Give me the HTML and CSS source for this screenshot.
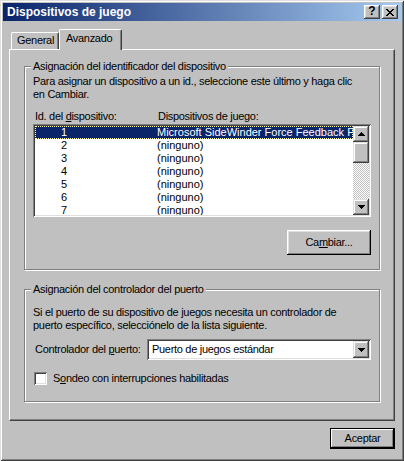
FILE: index.html
```html
<!DOCTYPE html>
<html lang="es">
<head>
<meta charset="UTF-8">
<meta name="viewport" content="width=device-width, initial-scale=1.0">
<title>Dispositivos de juego</title>
<link rel="stylesheet" href="styles.css">
</head>
<body>
    <div class="window">
        <div class="titlebar">
            <span class="title">Dispositivos de juego</span>
            <div class="caption-btns">
                <span class="cbtn help">?</span>
                <span class="cbtn">
                    <svg width="8" height="7" viewBox="0 0 8 7" shape-rendering="crispEdges">
                        <path d="M0 0h2v1h-2zM6 0h2v1h-2zM1 1h2v1h-2zM5 1h2v1h-2zM2 2h4v1h-4zM3 3h2v1h-2zM2 4h4v1h-4zM1 5h2v1h-2zM5 5h2v1h-2zM0 6h2v1h-2zM6 6h2v1h-2z" fill="#000"/>
                    </svg>
                </span>
            </div>
        </div>

        <div class="client">
            <div class="tabs">
                <div class="tab">General</div>
                <div class="tab active">Avanzado</div>
            </div>

            <div class="panel">
                <div class="group grupo-id">
                    <span class="legend">Asignación del identificador del dispositivo</span>
                    <p>Para asignar un dispositivo a un id., seleccione este último y haga clic<br>en Cambiar.</p>
                    <div class="cols">
                        <span class="col-id">Id. del <u>d</u>ispositivo:</span>
                        <span class="col-dev">Dispositivos de juego:</span>
                    </div>
                    <div class="listbox">
                        <div class="rows">
                            <div class="row sel"><span class="id">1</span><span class="dev">Microsoft SideWinder Force Feedback Pro</span></div>
                            <div class="row"><span class="id">2</span><span class="dev">(ninguno)</span></div>
                            <div class="row"><span class="id">3</span><span class="dev">(ninguno)</span></div>
                            <div class="row"><span class="id">4</span><span class="dev">(ninguno)</span></div>
                            <div class="row"><span class="id">5</span><span class="dev">(ninguno)</span></div>
                            <div class="row"><span class="id">6</span><span class="dev">(ninguno)</span></div>
                            <div class="row"><span class="id">7</span><span class="dev">(ninguno)</span></div>
                        </div>
                        <div class="vscroll">
                            <div class="sbtn">
                                <svg width="7" height="4" viewBox="0 0 7 4" shape-rendering="crispEdges"><path d="M3 0h1v1h-1zM2 1h3v1h-3zM1 2h5v1h-5zM0 3h7v1h-7z" fill="#000"/></svg>
                            </div>
                            <div class="thumb"></div>
                            <div class="track"></div>
                            <div class="sbtn">
                                <svg width="7" height="4" viewBox="0 0 7 4" shape-rendering="crispEdges"><path d="M0 0h7v1h-7zM1 1h5v1h-5zM2 2h3v1h-3zM3 3h1v1h-1z" fill="#000"/></svg>
                            </div>
                        </div>
                    </div>
                    <div class="acciones">
                        <button class="btn btn-cambiar">Ca<u>m</u>biar...</button>
                    </div>
                </div>

                <div class="group grupo-puerto">
                    <span class="legend">Asignación del controlador del puerto</span>
                    <p>Si el puerto de su dispositivo de juegos necesita un controlador de<br>puerto específico, selecciónelo de la lista siguiente.</p>
                    <div class="campo">
                        <span>Controlador del <u>p</u>uerto:</span>
                        <div class="combo">
                            <span class="combo-valor">Puerto de juegos estándar</span>
                            <div class="sbtn combo-btn">
                                <svg width="7" height="4" viewBox="0 0 7 4" shape-rendering="crispEdges"><path d="M0 0h7v1h-7zM1 1h5v1h-5zM2 2h3v1h-3zM3 3h1v1h-1z" fill="#000"/></svg>
                            </div>
                        </div>
                    </div>
                    <label class="check">
                        <span class="checkbox"></span>
                        <span>S<u>o</u>ndeo con interrupciones habilitadas</span>
                    </label>
                </div>
            </div>

            <div class="pie">
                <button class="btn default">Aceptar</button>
            </div>
        </div>
    </div>
</body>
</html>
```

FILE: styles.css
```css
* {
    box-sizing: border-box;
}

body {
    margin: 0;
    background: #c0c0c0;
    font-family: "Liberation Sans", Arial, sans-serif;
    font-size: 11px;
    line-height: 13px;
    letter-spacing: -0.3px;
    color: #000;
}

p {
    margin: 0;
    white-space: nowrap;
}

u {
    text-underline-offset: 1px;
}

.window {
    width: 404px;
    height: 461px;
    padding: 3px;
    display: flex;
    flex-direction: column;
    background: #c0c0c0;
    box-shadow: inset 1px 1px #dfdfdf, inset -1px -1px #404040,
                inset 2px 2px #fff, inset -2px -2px #808080;
}

/* barra de titulo */
.titlebar {
    height: 18px;
    display: flex;
    align-items: center;
    padding: 0 3px 0 4px;
    background: linear-gradient(to right, #0a246a, #a6caf0);
    color: #fff;
    font-size: 12px;
    font-weight: bold;
    letter-spacing: 0;
}

.title {
    flex: 1;
}

.caption-btns {
    display: flex;
    gap: 2px;
}

.cbtn {
    width: 16px;
    height: 14px;
    display: flex;
    align-items: center;
    justify-content: center;
    background: #c0c0c0;
    color: #000;
    box-shadow: inset -1px -1px #404040, inset 1px 1px #fff,
                inset -2px -2px #808080, inset 2px 2px #dfdfdf;
}

.cbtn.help {
    font-size: 12px;
    padding-bottom: 1px;
}

.client {
    flex: 1;
    display: flex;
    flex-direction: column;
    padding: 8px 6px 0;
}

/* pestañas */
.tabs {
    height: 20px;
    display: flex;
    align-items: flex-end;
    padding-left: 2px;
    position: relative;
    z-index: 1;
}

.tab {
    width: 48px;
    height: 17px;
    padding: 1px 0 0 5px;
    border: 1px solid #fff;
    border-bottom: 0;
    border-right-color: #404040;
    border-radius: 2px 2px 0 0;
    box-shadow: inset -1px 0 #808080;
    white-space: nowrap;
}

.tab.active {
    width: 63px;
    height: 21px;
    margin-bottom: -1px;
    padding: 2px 0 0 6px;
    background: #c0c0c0;
}

.panel {
    height: 372px;
    padding-left: 14px;
    border: 1px solid #fff;
    border-right-color: #404040;
    border-bottom-color: #404040;
    box-shadow: inset -1px -1px #808080;
}

/* grupos */
.group {
    position: relative;
    width: 356px;
    border: 1px solid #808080;
    box-shadow: inset 1px 1px #fff, 1px 1px #fff;
    padding: 8px 8px 14px;
}

.legend {
    position: absolute;
    top: -7px;
    left: 6px;
    padding: 0 2px;
    background: #c0c0c0;
    white-space: nowrap;
}

.grupo-id {
    margin-top: 16px;
}

.grupo-puerto {
    margin-top: 19px;
    padding-top: 16px;
    padding-bottom: 16px;
}

.cols {
    display: flex;
    margin-top: 9px;
    padding-left: 2px;
}

.col-id {
    width: 123px;
}

.listbox {
    height: 93px;
    margin-top: 1px;
    padding: 2px;
    display: flex;
    background: #fff;
    box-shadow: inset 1px 1px #808080, inset -1px -1px #fff,
                inset 2px 2px #404040, inset -2px -2px #dfdfdf;
}

.rows {
    flex: 1;
    overflow: hidden;
    letter-spacing: 0;
}

.row {
    height: 13px;
    display: flex;
    white-space: nowrap;
}

.row .id {
    width: 58px;
    flex-shrink: 0;
    text-align: center;
}

.row .dev {
    padding-left: 64px;
}

.row.sel {
    background: #0a246a;
    color: #fff;
    outline: 1px dotted #ffffa0;
    outline-offset: -1px;
}

.vscroll {
    width: 16px;
    display: flex;
    flex-direction: column;
}

.sbtn,
.thumb {
    background: #c0c0c0;
    box-shadow: inset -1px -1px #404040, inset 1px 1px #dfdfdf,
                inset -2px -2px #808080, inset 2px 2px #fff;
}

.sbtn {
    height: 16px;
    display: flex;
    align-items: center;
    justify-content: center;
}

.thumb {
    height: 21px;
}

.track {
    flex: 1;
    background: repeating-conic-gradient(#fff 0 25%, #c0c0c0 0 50%) 0 0 / 2px 2px;
}

.acciones {
    display: flex;
    justify-content: flex-end;
    margin-top: 13px;
}

/* botones */
.btn {
    height: 25px;
    padding: 0;
    border: 0;
    background: #c0c0c0;
    font: inherit;
    letter-spacing: inherit;
    color: #000;
    box-shadow: inset -1px -1px #000, inset 1px 1px #fff,
                inset -2px -2px #808080, inset 2px 2px #dfdfdf;
}

.btn-cambiar {
    width: 84px;
}

.btn.default {
    width: 65px;
    height: 21px;
    box-shadow: inset 0 0 0 1px #000, inset -2px -2px #000, inset 2px 2px #fff,
                inset -3px -3px #808080;
}

.campo {
    display: flex;
    align-items: center;
    justify-content: space-between;
    margin-top: 7px;
    padding-left: 2px;
    white-space: nowrap;
}

.combo {
    width: 224px;
    height: 21px;
    padding: 2px;
    display: flex;
    align-items: center;
    background: #fff;
    box-shadow: inset 1px 1px #808080, inset -1px -1px #fff,
                inset 2px 2px #404040, inset -2px -2px #dfdfdf;
}

.combo-valor {
    flex: 1;
    padding-left: 3px;
}

.combo-btn {
    width: 16px;
    height: 17px;
}

.check {
    display: flex;
    align-items: center;
    gap: 6px;
    margin-top: 12px;
    padding-left: 1px;
}

.checkbox {
    width: 13px;
    height: 13px;
    background: #fff;
    box-shadow: inset 1px 1px #808080, inset -1px -1px #fff,
                inset 2px 2px #404040, inset -2px -2px #dfdfdf;
}

.pie {
    display: flex;
    justify-content: flex-end;
    padding-top: 7px;
}
```
